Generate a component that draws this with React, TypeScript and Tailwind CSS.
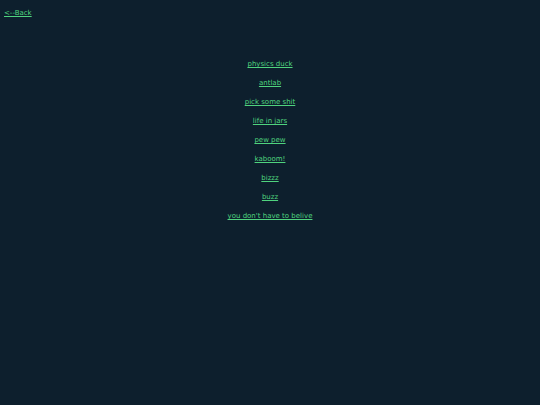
import React from "react";

const items = [
  "physics duck",
  "antlab",
  "pick some shit",
  "life in jars",
  "pew pew",
  "kaboom!",
  "bizzz",
  "buzz",
  "you don't have to belive",
];

export default function App() {
  return (
    <div
      className="w-[540px] h-[405px] bg-[#0d1f2d] text-[#4fd37e] text-[7px] leading-[9px]"
      style={{ fontFamily: '"DejaVu Sans", sans-serif' }}
    >
      <div className="pl-[4px] pt-[9px]">
        <a href="#" className="underline">&lt;--Back</a>
      </div>
      <div className="flex flex-col items-center gap-[10px] pt-[42px]">
        {items.map((t) => (
          <a key={t} href="#" className="underline">
            {t}
          </a>
        ))}
      </div>
    </div>
  );
}
